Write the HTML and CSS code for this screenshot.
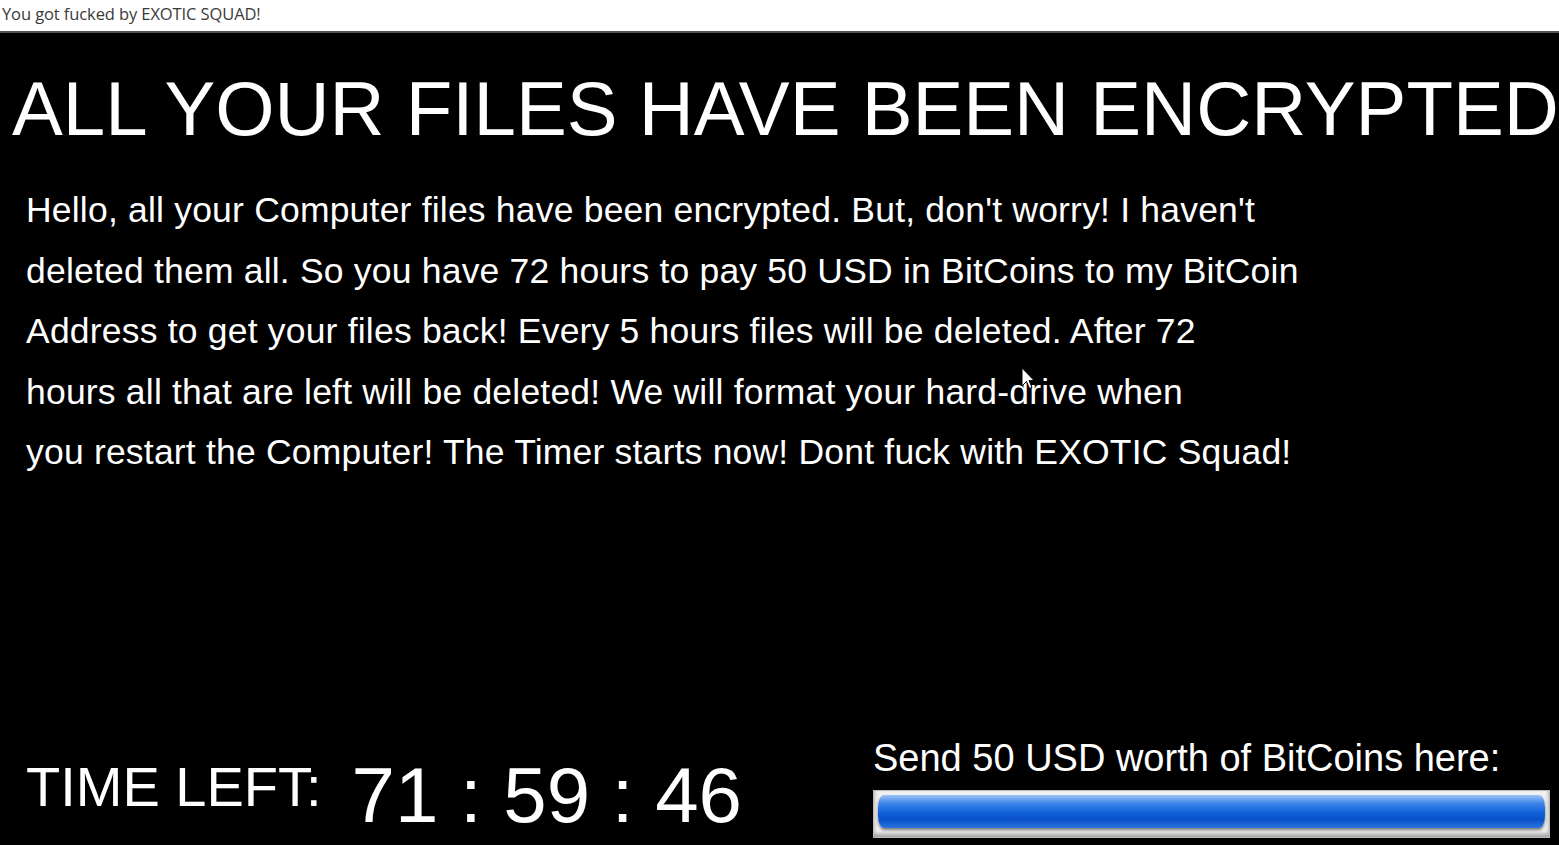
FILE: index.html
```html
<!DOCTYPE html>
<html>
<head>
<meta charset="utf-8">
<link rel="stylesheet" href="styles.css">
</head>
<body>
<div class="window">
  <div class="titlebar">You got fucked by EXOTIC SQUAD!</div>
  <div class="content">
    <h1 class="headline">ALL YOUR FILES HAVE BEEN ENCRYPTED</h1>
    <div class="message">
      <p class="line">Hello, all your Computer files have been encrypted. But, don't worry! I haven't</p>
      <p class="line">deleted them all. So you have 72 hours to pay 50 USD in BitCoins to my BitCoin</p>
      <p class="line">Address to get your files back! Every 5 hours files will be deleted. After 72</p>
      <p class="line">hours all that are left will be deleted! We will format your hard-drive when</p>
      <p class="line">you restart the Computer! The Timer starts now! Dont fuck with EXOTIC Squad!</p>
    </div>
    <div class="spacer"></div>
    <div class="bottom">
      <div class="timer">
        <span class="timer-label">TIME LEFT:</span>
        <span class="timer-digits">71 : 59 : 46</span>
      </div>
      <div class="pay">
        <div class="pay-label">Send 50 USD worth of BitCoins here:</div>
        <div class="pay-box"><div class="pay-fill"></div></div>
      </div>
    </div>
    <svg class="cursor" width="14" height="24" viewBox="0 0 14 24"><path d="M1 1 L1 19 L5.5 14.5 L8.5 21.5 L11 20.5 L8 13.5 L13 13.5 Z" fill="#fff" stroke="#000" stroke-width="1"/></svg>
  </div>
</div>
</body>
</html>
```
FILE: styles.css
```css
html, body {
  margin: 0;
  padding: 0;
  background: #000;
}
.window {
  width: 1559px;
  height: 845px;
  display: flex;
  flex-direction: column;
  overflow: hidden;
}
.titlebar {
  height: 31px;
  background: #fff;
  border-bottom: 2px solid #555;
  font-family: "Open Sans", "Liberation Sans", sans-serif;
  font-size: 16.5px;
  color: #3a3a3a;
  line-height: 27px;
  padding-left: 2px;
  letter-spacing: -0.1px;
  white-space: nowrap;
}
.content {
  flex: 1;
  position: relative;
  background: #000;
  color: #fff;
  font-family: "Liberation Sans", Arial, sans-serif;
  display: flex;
  flex-direction: column;
}
.headline {
  margin: 38px 0 0 12px;
  font-weight: normal;
  font-size: 76.2px;
  line-height: 76px;
  white-space: nowrap;
}
.message {
  margin: 33px 0 0 26px;
}
.line {
  margin: 0;
  font-size: 35.5px;
  letter-spacing: 0.2px;
  line-height: 60.5px;
  white-space: nowrap;
}
.spacer { flex: 1; }
.bottom {
  display: flex;
  justify-content: space-between;
  align-items: flex-end;
  padding: 0 9px 7px 26px;
}
.timer {
  display: flex;
  align-items: flex-start;
  gap: 30px;
  margin-bottom: 4px;
}
.timer-label {
  font-size: 56px;
  line-height: 56px;
  margin-top: 3px;
}
.timer-digits {
  font-size: 78px;
  line-height: 78px;
}
.pay {
  display: flex;
  flex-direction: column;
  width: 677px;
}
.pay-label {
  font-size: 38px;
  line-height: 44px;
  white-space: nowrap;
}
.pay-box {
  margin-top: 10px;
  height: 48px;
  box-sizing: border-box;
  background: #f2f2f2;
  border: 1px solid #bbb;
  padding: 4px 4px 9px 4px;
  box-shadow: inset 0 -3px 4px rgba(0,0,0,0.35);
}
.pay-fill {
  height: 100%;
  border-radius: 6px / 12px;
  background: linear-gradient(#9cc3f5 0%, #3f86ea 25%, #0e5fd8 55%, #0a52c8 75%, #2b74e0 100%);
  box-shadow: 0 2px 3px rgba(0,0,0,0.5);
}
.cursor {
  position: absolute;
  left: 1021px;
  top: 334px;
}
```
